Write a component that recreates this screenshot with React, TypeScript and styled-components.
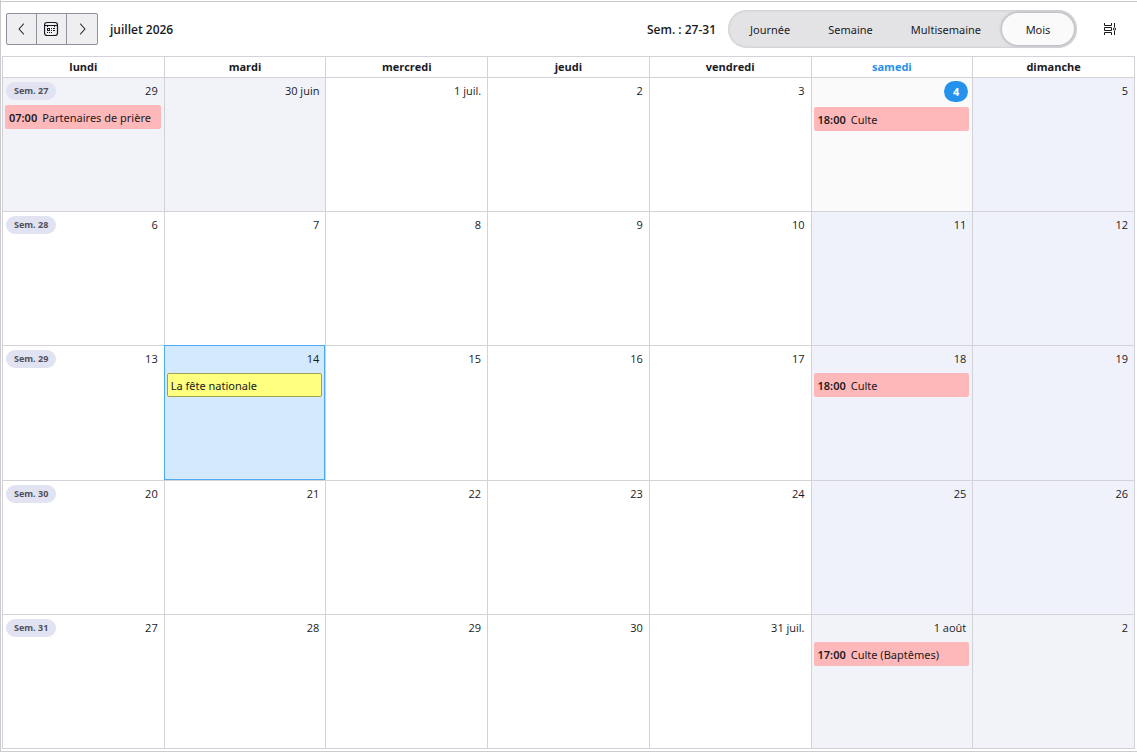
import React from "react";
import styled, { createGlobalStyle, css } from "styled-components";

const GlobalStyle = createGlobalStyle`
  * { box-sizing: border-box; }
  body {
    margin: 0;
    background: #fff;
    color: #1a1a1e;
    font: 12px/16px "Open Sans", "Segoe UI", sans-serif;
  }
  button { font: inherit; color: inherit; }
`;

const Page = styled.main`
  display: flex;
  flex-direction: column;
  min-height: 100vh;
  padding: 0 2px 2px 1px;
  border: solid #cbcbcf;
  border-width: 0 0 1px 1px;
`;

const Toolbar = styled.header`
  display: flex;
  align-items: center;
  height: 55px;
  padding: 0 15px 0 5px;
  border-top: 1px solid #cbcbcf;
  margin: 1px -2px 0 -1px;
  flex: none;
`;

const NavGroup = styled.div`
  display: flex;
`;

const NavButton = styled.button`
  display: grid;
  place-items: center;
  width: 31px;
  height: 32px;
  padding: 0;
  border: 1px solid #8f8f9d;
  background: #efeff2;
  & + & { margin-left: -1px; }
  &:first-child { border-radius: 2px 0 0 2px; }
  &:last-child { width: 32px; border-radius: 0 2px 2px 0; }
`;

const Period = styled.h1`
  margin: 0 auto 0 12px;
  padding-top: 2px;
  font-size: 12px;
  font-weight: 600;
`;

const WeekRange = styled.span`
  margin-right: 12px;
  padding-top: 2px;
  font-weight: 600;
`;

const ViewSwitch = styled.div`
  display: flex;
  height: 38px;
  padding: 3px;
  border-radius: 19px;
  background: #e3e3e6;
  box-shadow: inset 0 0 3px #bcbcc2;
`;

const ViewButton = styled.button<{ $active?: boolean }>`
  min-width: 72px;
  padding: 1px 19px 0;
  border: 0;
  border-radius: 16px;
  background: transparent;
  font-family: "Noto Sans", sans-serif;
  font-size: 11px;
  ${(p) => p.$active && css`
    margin-left: 2px;
    background: #fafafa;
    box-shadow: 0 0 3px 1px #b0b0b6;
  `}
`;

const IconButton = styled.button`
  display: grid;
  place-items: center;
  width: 24px;
  height: 24px;
  margin-left: 21px;
  padding: 0;
  border: 0;
  background: transparent;
`;

const Calendar = styled.table`
  flex: 1;
  width: 100%;
  table-layout: fixed;
  border-collapse: separate;
  border-spacing: 0;
  border: solid #d2d2d8;
  border-width: 0 1px 1px 0;
`;

const DayName = styled.th<{ $today?: boolean }>`
  height: 21px;
  padding: 0;
  border: solid #d2d2d8;
  border-width: 1px 0 0 1px;
  font-size: 11px;
  font-weight: 700;
  ${(p) => p.$today && css`color: #2492ed;`}
`;

type Tone = "plain" | "outside" | "weekend" | "today" | "selected";

const toneColor: Record<Tone, string> = {
  plain: "#fff",
  outside: "#f2f3f8",
  weekend: "#eff2fb",
  today: "#fafafa",
  selected: "#d3e9fd",
};

const DayCell = styled.td<{ $tone: Tone }>`
  height: 80px;
  padding: 0 3px 0 2px;
  vertical-align: top;
  border: solid #d2d2d8;
  border-width: 1px 0 0 1px;
  background: ${(p) => toneColor[p.$tone]};
  ${(p) => p.$tone === "selected" && css`
    border-color: #4fa9f5;
    box-shadow: inset -1px -1px 0 #4fa9f5;
  `}
`;

const DayHead = styled.div<{ $today?: boolean }>`
  display: flex;
  align-items: center;
  justify-content: space-between;
  height: ${(p) => (p.$today ? 27 : 26)}px;
  margin-bottom: ${(p) => (p.$today ? 2 : 1)}px;
  padding: 0 3px 0 1px;
  font-size: 11px;
  ${(p) => p.$today && css`padding-right: 1px;`}
`;

const WeekLabel = styled.span`
  padding: 0 8px;
  border-radius: 9px;
  background: #e2e3f2;
  color: #50505a;
  font-size: 9px;
  font-weight: 700;
  line-height: 18px;
`;

const DayNumber = styled.time<{ $today?: boolean }>`
  margin-left: auto;
  ${(p) => p.$today && css`
    width: 24px;
    border-radius: 11px;
    background: #2492ed;
    color: #fff;
    font-weight: 700;
    line-height: 21px;
    text-align: center;
  `}
`;

const Event = styled.div<{ $holiday?: boolean }>`
  display: flex;
  gap: 5px;
  height: 24px;
  padding: 0 4px;
  border: 1px solid transparent;
  border-left-width: 0;
  border-radius: 2px;
  background: #ffb8b9;
  font-family: "Noto Sans", sans-serif;
  font-size: 11px;
  line-height: 23px;
  white-space: nowrap;
  overflow: hidden;
  ${(p) => p.$holiday && css`
    padding-left: 3px;
    border: 1px solid #a3a34f;
    background: #ffff80;
  `}
`;

const EventTime = styled.time`
  font-weight: 600;
`;

interface Day {
  label: string;
  tone?: Tone;
  event?: { time?: string; title: string };
}

const dayNames = ["lundi", "mardi", "mercredi", "jeudi", "vendredi", "samedi", "dimanche"];
const views = ["Journée", "Semaine", "Multisemaine", "Mois"];

const weeks: { number: number; days: Day[] }[] = [
  {
    number: 27,
    days: [
      { label: "29", tone: "outside", event: { time: "07:00", title: "Partenaires de prière" } },
      { label: "30 juin", tone: "outside" },
      { label: "1 juil." },
      { label: "2" },
      { label: "3" },
      { label: "4", tone: "today", event: { time: "18:00", title: "Culte" } },
      { label: "5", tone: "weekend" },
    ],
  },
  {
    number: 28,
    days: [
      { label: "6" }, { label: "7" }, { label: "8" }, { label: "9" }, { label: "10" },
      { label: "11", tone: "weekend" },
      { label: "12", tone: "weekend" },
    ],
  },
  {
    number: 29,
    days: [
      { label: "13" },
      { label: "14", tone: "selected", event: { title: "La fête nationale" } },
      { label: "15" }, { label: "16" }, { label: "17" },
      { label: "18", tone: "weekend", event: { time: "18:00", title: "Culte" } },
      { label: "19", tone: "weekend" },
    ],
  },
  {
    number: 30,
    days: [
      { label: "20" }, { label: "21" }, { label: "22" }, { label: "23" }, { label: "24" },
      { label: "25", tone: "weekend" },
      { label: "26", tone: "weekend" },
    ],
  },
  {
    number: 31,
    days: [
      { label: "27" }, { label: "28" }, { label: "29" }, { label: "30" }, { label: "31 juil." },
      { label: "1 août", tone: "outside", event: { time: "17:00", title: "Culte (Baptêmes)" } },
      { label: "2", tone: "outside" },
    ],
  },
];

const Chevron = ({ d }: { d: string }) => (
  <svg width="15" height="16" viewBox="0 0 15 16" fill="none" stroke="#1a1a1e" strokeWidth="1.1" strokeLinecap="round" strokeLinejoin="round">
    <path d={d} />
  </svg>
);

const TodayIcon = () => (
  <svg width="15" height="16" viewBox="0 0 15 16" fill="none" stroke="#1a1a1e">
    <rect x="0.5" y="1.5" width="13" height="13" rx="2.5" strokeWidth="1.2" />
    <path d="M.5 4.500h13M3.500 4v2M10.500 4v2" />
    <rect x="3.500" y="7.500" width="2" height="2" />
    <path d="M7 7.500h1M9 7.500h2M7 9.500h1M9 9.500h2M3 11.500h1M5 11.500h1M7 11.500h1" />
  </svg>
);

const DisplayIcon = () => (
  <svg width="16" height="16" viewBox="0 0 16 16" fill="none" stroke="#1a1a1e">
    <path d="M2.500 2v2.500h7V2M2.500 14v-2.500h7V14M2.500 6.500h7v3h-7zM12.500 2v4M12.500 10v4" />
    <circle cx="12.500" cy="8" r="1.200" />
  </svg>
);

export default function App() {
  return (
    <>
      <GlobalStyle />
      <Page>
        <Toolbar>
          <NavGroup>
            <NavButton aria-label="Mois précédent"><Chevron d="M9.500 3 5 8l4.500 5" /></NavButton>
            <NavButton aria-label="Aujourd’hui"><TodayIcon /></NavButton>
            <NavButton aria-label="Mois suivant"><Chevron d="m5.500 3 4.500 5-4.500 5" /></NavButton>
          </NavGroup>
          <Period>juillet 2026</Period>
          <WeekRange>Sem. : 27-31</WeekRange>
          <ViewSwitch>
            {views.map((view) => (
              <ViewButton key={view} $active={view === "Mois"} aria-pressed={view === "Mois"}>{view}</ViewButton>
            ))}
          </ViewSwitch>
          <IconButton aria-label="Options d’affichage"><DisplayIcon /></IconButton>
        </Toolbar>
        <Calendar>
          <thead>
            <tr>
              {dayNames.map((name) => (
                <DayName key={name} scope="col" $today={name === "samedi"}>{name}</DayName>
              ))}
            </tr>
          </thead>
          <tbody>
            {weeks.map((week) => (
              <tr key={week.number}>
                {week.days.map(({ label, tone = "plain", event }, i) => (
                  <DayCell key={label} $tone={tone}>
                    <DayHead $today={tone === "today"}>
                      {i === 0 && <WeekLabel>Sem. {week.number}</WeekLabel>}
                      <DayNumber $today={tone === "today"}>{label}</DayNumber>
                    </DayHead>
                    {event && (
                      <Event $holiday={!event.time}>
                        {event.time && <EventTime>{event.time}</EventTime>}
                        <span>{event.title}</span>
                      </Event>
                    )}
                  </DayCell>
                ))}
              </tr>
            ))}
          </tbody>
        </Calendar>
      </Page>
    </>
  );
}
